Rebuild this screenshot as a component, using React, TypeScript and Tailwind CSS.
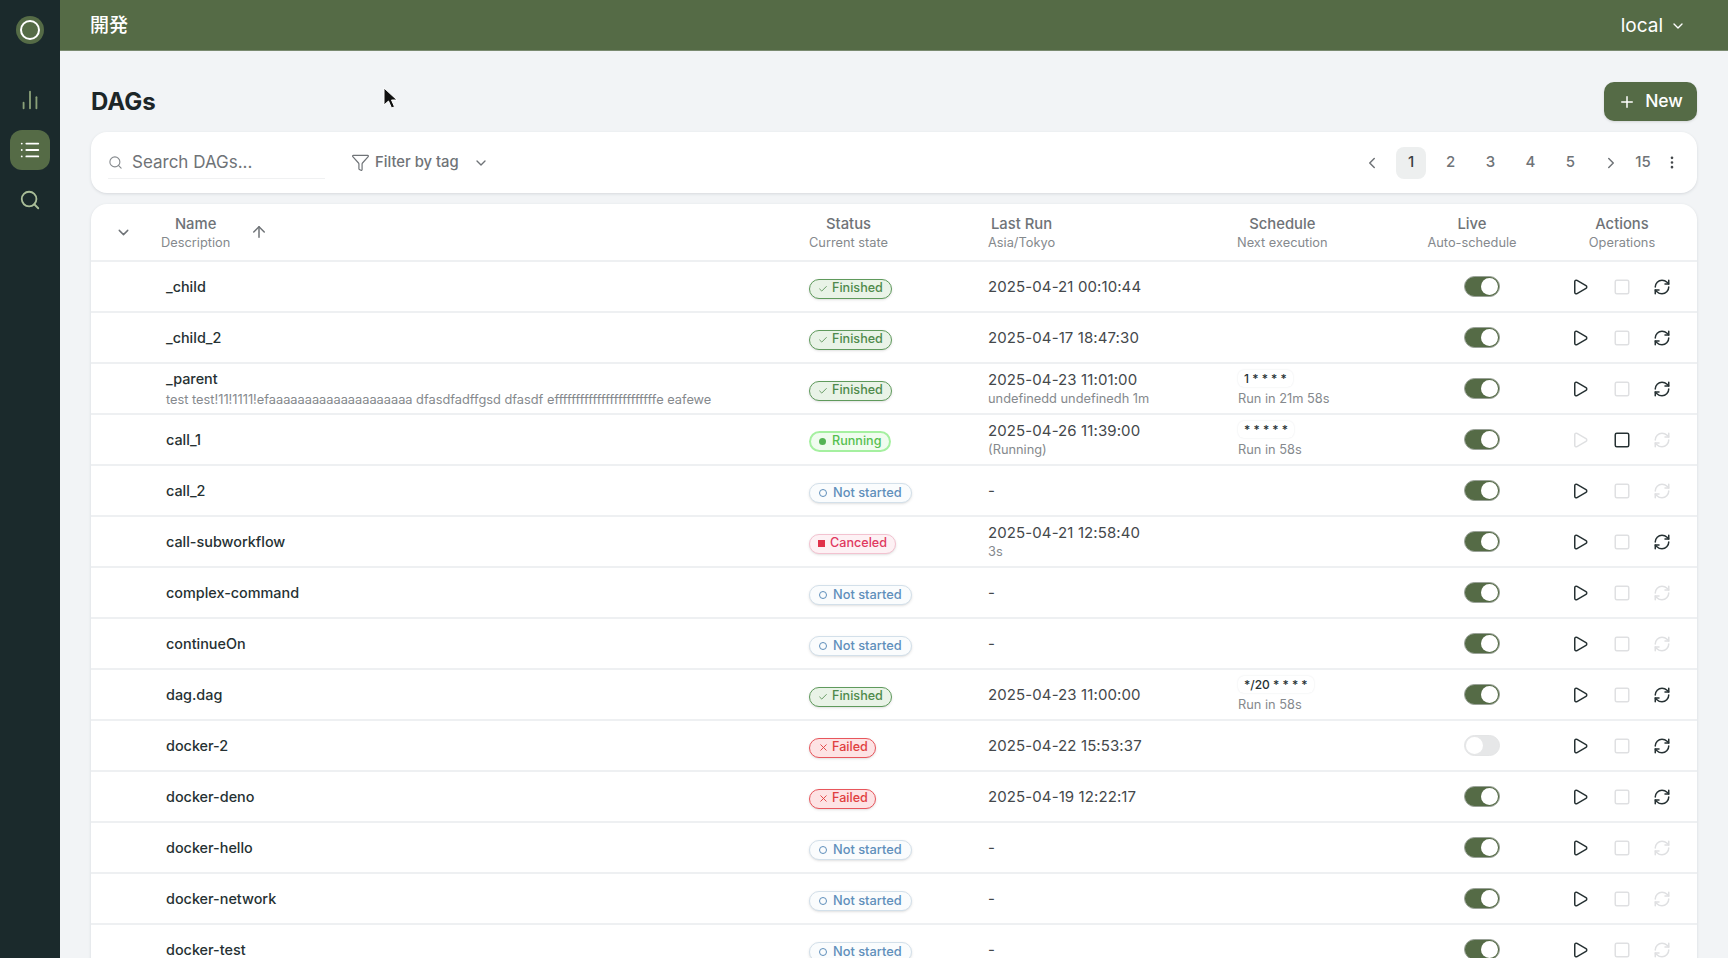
import { Check, ChevronDown, ChevronLeft, ChevronRight, ChartNoAxesColumn, ArrowUp, EllipsisVertical, Funnel, List, Play, Plus, RefreshCw, Search, Square, X } from "lucide-react";

type Status = "finished" | "running" | "none" | "canceled" | "failed";

interface Dag {
  name: string;
  desc?: string;
  status: Status;
  run: string;
  runSub?: string;
  cron?: string;
  next?: string;
  live?: boolean;
  refreshOff?: boolean;
}

const dags: Dag[] = [
  { name: "_child", status: "finished", run: "2025-04-21 00:10:44" },
  { name: "_child_2", status: "finished", run: "2025-04-17 18:47:30" },
  {
    name: "_parent",
    desc: "test test!11!1111!efaaaaaaaaaaaaaaaaaaaa dfasdfadffgsd dfasdf effffffffffffffffffffffffe eafewe",
    status: "finished",
    run: "2025-04-23 11:01:00",
    runSub: "undefinedd undefinedh 1m",
    cron: "1 * * * *",
    next: "Run in 21m 58s",
  },
  { name: "call_1", status: "running", run: "2025-04-26 11:39:00", runSub: "(Running)", cron: "* * * * *", next: "Run in 58s", refreshOff: true },
  { name: "call_2", status: "none", run: "-", refreshOff: true },
  { name: "call-subworkflow", status: "canceled", run: "2025-04-21 12:58:40", runSub: "3s" },
  { name: "complex-command", status: "none", run: "-", refreshOff: true },
  { name: "continueOn", status: "none", run: "-", refreshOff: true },
  { name: "dag.dag", status: "finished", run: "2025-04-23 11:00:00", cron: "*/20 * * * *", next: "Run in 58s" },
  { name: "docker-2", status: "failed", run: "2025-04-22 15:53:37", live: false },
  { name: "docker-deno", status: "failed", run: "2025-04-19 12:22:17" },
  { name: "docker-hello", status: "none", run: "-", refreshOff: true },
  { name: "docker-network", status: "none", run: "-", refreshOff: true },
  { name: "docker-test", status: "none", run: "-", refreshOff: true },
];

const cols = "grid grid-cols-[67px_643px_179px_249px_168px_150px_150px]";

const Badge = ({ status }: { status: Status }) => {
  if (status === "finished")
    return (
      <span className="inline-flex h-[20px] items-center gap-[4px] rounded-full border border-[#5f9a5c] bg-[#e9f3e7] pl-[8px] pr-[8px] text-[12.6px] font-medium text-[#4f8a4c] shadow-sm">
        <Check size={10} strokeWidth={2} />
        Finished
      </span>
    );
  if (status === "running")
    return (
      <span className="inline-flex h-[21px] items-center gap-[6px] rounded-full border-2 border-[#a5f0a0] bg-[#f0fcef] pl-[8px] pr-[8px] text-[12.6px] font-medium text-[#55c04f]">
        <span className="h-[7px] w-[7px] rounded-full bg-[#55b455]" />
        Running
      </span>
    );
  if (status === "canceled")
    return (
      <span className="inline-flex h-[20px] items-center gap-[5px] rounded-full border border-[#f3c2d0] bg-[#fdf1f4] pl-[8px] pr-[8px] text-[12.6px] font-medium text-[#e0395f] shadow-sm">
        <span className="h-[7px] w-[7px] bg-[#e0324a]" />
        Canceled
      </span>
    );
  if (status === "failed")
    return (
      <span className="inline-flex h-[20px] items-center gap-[3px] rounded-full border border-[#e8565c] bg-[#fde3e4] pl-[8px] pr-[7px] text-[12.6px] font-medium text-[#e0403f] shadow-sm">
        <X size={11} strokeWidth={2} />
        Failed
      </span>
    );
  return (
    <span className="inline-flex h-[20px] items-center gap-[6px] rounded-full border border-[#d3e0ea] bg-[#fafcfd] pl-[9px] pr-[9px] text-[12.8px] font-medium text-[#5f8fbb] shadow-sm">
      <span className="h-[8px] w-[8px] rounded-full border-[1.5px] border-[#5f8fbb]" />
      Not started
    </span>
  );
};

const HeadCell = ({ title, sub }: { title: string; sub: string }) => (
  <div className="flex flex-col items-center">
    <span className="text-[14.8px] font-medium leading-[20px] text-[#6f7377]">{title}</span>
    <span className="mt-[1px] text-[12.8px] leading-[16px] text-[#85898d]">{sub}</span>
  </div>
);

const Row = ({ dag }: { dag: Dag }) => {
  const running = dag.status === "running";
  const on = dag.live !== false;
  return (
    <div className={`${cols} h-[51px] items-center border-t-2 border-[#eef0f2]`}>
      <div />
      <div className="pl-[8px]">
        <div className="text-[14.4px] font-medium leading-[20px] text-[#263133]">{dag.name}</div>
        {dag.desc && <div className="mt-[3px] whitespace-nowrap text-[12.8px] leading-[16px] text-[#85898d]">{dag.desc}</div>}
      </div>
      <div className="flex pl-[8px] pt-[4px]">
        <Badge status={dag.status} />
      </div>
      <div className="pl-[8px]">
        <div className="text-[15px] leading-[20px] tracking-[0.1px] text-[#44484b]">{dag.run}</div>
        {dag.runSub && <div className="mt-[1px] text-[12.8px] leading-[16px] text-[#85898d]">{dag.runSub}</div>}
      </div>
      <div className="pl-[9px]">
        {dag.cron && (
          <>
            <span className="mb-[4px] block h-[17px] w-fit whitespace-pre rounded-md px-[6px] text-[12px] font-medium leading-[17px] text-[#263133] shadow-[0_0_2px_#e4e6e8]">{dag.cron}</span>
            <div className="text-[12.8px] leading-[16px] text-[#85898d]">{dag.next}</div>
          </>
        )}
      </div>
      <div className="flex justify-center pl-[20px]">
        <span
          className={`flex h-[21px] w-[36px] items-center rounded-full border border-[#9aa298] p-[1px] ${on ? "justify-end bg-[#556b46]" : "justify-start border-[#e4e5e6] bg-[#e6e7e8]"}`}
        >
          <span className="h-[17px] w-[17px] rounded-full bg-white" />
        </span>
      </div>
      <div className="flex items-center justify-center gap-[22px] pr-[1px]">
        <Play size={18} strokeWidth={2} className={`-ml-[2px] mr-[2px] ${running ? "text-[#dfe0e2]" : "text-[#263133]"}`} />
        <Square size={18} strokeWidth={2} className={running ? "text-[#263133]" : "text-[#dfe0e2]"} />
        <RefreshCw size={18} strokeWidth={2} className={dag.refreshOff ? "text-[#dfe0e2]" : "text-[#263133]"} />
      </div>
    </div>
  );
};

export default function App() {
  return (
    <div className="relative flex h-screen w-full overflow-hidden bg-[#f2f4f6] font-[Inter,'Noto_Sans_CJK_JP',sans-serif]">
      {/* sidebar */}
      <aside className="flex w-[60px] shrink-0 flex-col items-center bg-[#1b2a2c] pt-[16px]">
        <div className="flex h-[28px] w-[28px] items-center justify-center rounded-full bg-[#556b46]">
          <div className="h-[20px] w-[20px] rounded-full border-2 border-white" />
        </div>
        <ChartNoAxesColumn size={22} strokeWidth={2} className="mt-[45px] text-[#8aa078]" />
        <div className="mt-[19px] flex h-[40px] w-[40px] items-center justify-center rounded-xl bg-[#556b46]">
          <List size={22} strokeWidth={2} className="text-white" />
        </div>
        <Search size={22} strokeWidth={2} className="mt-[19px] text-[#a9bd98]" />
      </aside>

      <div className="flex min-w-0 flex-1 flex-col">
        {/* top bar */}
        <header className="flex h-[51px] shrink-0 items-center justify-between border-b border-[#7a8a70] bg-[#556b46] pl-[30px] pr-[42px] pt-[2px] text-white">
          <span className="text-[19px] font-medium">開発</span>
          <span className="flex items-center gap-[7px] text-[19px]">
            local
            <ChevronDown size={16} strokeWidth={2} />
          </span>
        </header>

        <main className="flex-1 overflow-hidden px-[31px] pt-[31px]">
          <div className="mb-[11px] flex h-[39px] items-center justify-between">
            <h1 className="text-[24px] font-bold text-[#1c2628]">DAGs</h1>
            <button className="flex h-[39px] w-[93px] items-center justify-center gap-[9px] rounded-[10px] bg-[#556b46] text-[17.5px] font-medium text-white shadow-sm">
              <Plus size={18} strokeWidth={2} />
              New
            </button>
          </div>

          {/* search and pagination */}
          <div className="mb-[11px] flex h-[61px] items-center justify-between rounded-2xl bg-white pl-[17px] pr-[16px] shadow-[0_1px_3px_#d5d8dc]">
            <div className="flex items-center">
              <div className="flex h-[32px] w-[217px] items-center gap-[9px] border-b border-[#f0f1f2]">
                <Search size={15} strokeWidth={1.75} className="text-[#85898d]" />
                <span className="pt-[2px] text-[17px] text-[#6f7377]">Search DAGs...</span>
              </div>
              <Funnel size={19} strokeWidth={1.5} className="ml-[26px] text-[#6f7377]" />
              <span className="ml-[5px] text-[14.8px] font-medium text-[#6f7377]">Filter by tag</span>
              <ChevronDown size={16} strokeWidth={2} className="ml-[14px] text-[#6f7377]" />
            </div>
            <div className="flex items-center pr-[1px] text-[15px] font-medium text-[#6f7377]">
              <span className="flex w-[49px] justify-center"><ChevronLeft size={18} strokeWidth={2} /></span>
              <span className="flex h-[32px] w-[30px] items-center justify-center rounded-lg bg-[#edefef] text-[#3c4144]">1</span>
              <span className="flex w-[49px] justify-center">2</span>
              <span className="flex w-[31px] justify-center">3</span>
              <span className="flex w-[49px] justify-center">4</span>
              <span className="flex w-[31px] justify-center">5</span>
              <span className="flex w-[49px] justify-center"><ChevronRight size={18} strokeWidth={2} /></span>
              <span className="flex w-[16px] justify-center">15</span>
              <span className="ml-[13px] flex w-[16px] justify-center"><EllipsisVertical size={17} strokeWidth={2} className="text-[#44484b]" /></span>
            </div>
          </div>

          {/* table */}
          <div className="rounded-t-2xl bg-white shadow-[0_1px_3px_#d5d8dc]">
            <div className={`${cols} h-[56px] items-center`}>
              <div className="flex justify-end pr-[26px]">
                <ChevronDown size={17} strokeWidth={2} className="text-[#6f7377]" />
              </div>
              <div className="flex items-center gap-[20px] pl-[3px]">
                <HeadCell title="Name" sub="Description" />
                <ArrowUp size={18} strokeWidth={2} className="text-[#6f7377]" />
              </div>
              <div className="flex pl-[8px]"><HeadCell title="Status" sub="Current state" /></div>
              <div className="flex pl-[8px]"><HeadCell title="Last Run" sub="Asia/Tokyo" /></div>
              <div className="flex pl-[8px]"><HeadCell title="Schedule" sub="Next execution" /></div>
              <div className="flex justify-center"><HeadCell title="Live" sub="Auto-schedule" /></div>
              <div className="flex justify-center"><HeadCell title="Actions" sub="Operations" /></div>
            </div>
            {dags.map((d) => (
              <Row key={d.name} dag={d} />
            ))}
          </div>
        </main>
      </div>

      {/* mouse pointer */}
      <svg className="absolute left-[383px] top-[87px]" width="16" height="24" viewBox="0 0 16 24">
        <path d="M1 1 L1 18 L5.5 14 L8.5 21 L11.5 19.8 L8.5 13 L14 13 Z" fill="#111" stroke="#fff" strokeWidth="1" />
      </svg>
    </div>
  );
}
